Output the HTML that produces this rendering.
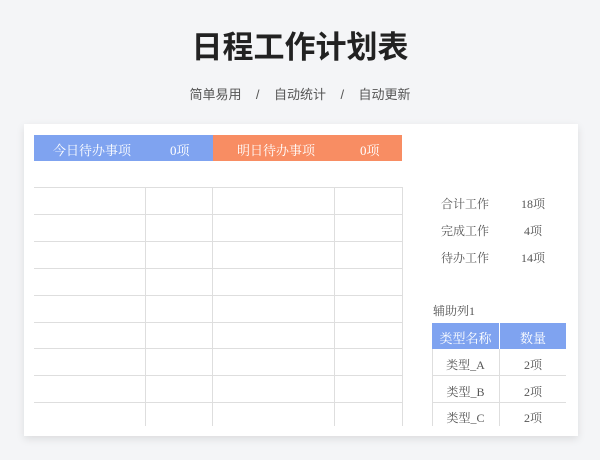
<!DOCTYPE html>
<html><head><meta charset="utf-8"><style>
*{margin:0;padding:0;box-sizing:border-box}
body{width:600px;height:460px;background:#f4f5f7;position:relative;overflow:hidden;font-family:"Liberation Serif","Noto Serif CJK SC",serif}
.t{position:absolute;left:0;width:600px;text-align:center;font-family:"Liberation Sans","Noto Sans CJK SC",sans-serif}
.card{position:absolute;left:24px;top:124px;width:554px;height:312px;background:#fff;box-shadow:0 3px 8px rgba(0,0,0,.1)}
.a{position:absolute}
.h{position:absolute;height:1px;background:#dedede}
.v{position:absolute;width:1px;background:#dedede}
.w{color:#fff;font-size:13px}
.g{color:#555;font-size:12px}
</style></head><body>
<div class="t" style="top:22px;font-size:31px;font-weight:bold;color:#222;letter-spacing:0px">日程工作计划表</div>
<div class="t" style="top:84px;font-size:13px;color:#555;word-spacing:0">简单易用&nbsp;&nbsp;&nbsp;&nbsp;/&nbsp;&nbsp;&nbsp;&nbsp;自动统计&nbsp;&nbsp;&nbsp;&nbsp;/&nbsp;&nbsp;&nbsp;&nbsp;自动更新</div>
<div class="card"></div>
<div class="a" style="left:34px;top:135px;width:179px;height:26px;background:#7fa3f0"></div>
<div class="a" style="left:213px;top:135px;width:189px;height:26px;background:#f88d63"></div>
<div class="a w" style="left:53px;top:140px">今日待办事项</div>
<div class="a w" style="left:170px;top:140px">0项</div>
<div class="a w" style="left:237px;top:140px">明日待办事项</div>
<div class="a w" style="left:360px;top:140px">0项</div>

<div class="h" style="left:34px;top:187px;width:369px"></div>
<div class="h" style="left:34px;top:214px;width:369px"></div>
<div class="h" style="left:34px;top:241px;width:369px"></div>
<div class="h" style="left:34px;top:268px;width:369px"></div>
<div class="h" style="left:34px;top:295px;width:369px"></div>
<div class="h" style="left:34px;top:322px;width:369px"></div>
<div class="h" style="left:34px;top:348px;width:369px"></div>
<div class="h" style="left:34px;top:375px;width:369px"></div>
<div class="h" style="left:34px;top:402px;width:369px"></div>
<div class="v" style="left:145px;top:187px;height:239px"></div>
<div class="v" style="left:212px;top:187px;height:239px"></div>
<div class="v" style="left:334px;top:187px;height:239px"></div>
<div class="v" style="left:402px;top:187px;height:239px"></div>

<div class="a g" style="left:441px;top:195px">合计工作</div>
<div class="a g" style="left:521px;top:195px">18项</div>
<div class="a g" style="left:441px;top:222px">完成工作</div>
<div class="a g" style="left:524px;top:222px">4项</div>
<div class="a g" style="left:441px;top:249px">待办工作</div>
<div class="a g" style="left:521px;top:249px">14项</div>
<div class="a g" style="left:433px;top:302px">辅助列1</div>

<div class="a" style="left:432px;top:323px;width:67px;height:26px;background:#7fa3f0"></div>
<div class="a" style="left:500px;top:323px;width:66px;height:26px;background:#7fa3f0"></div>
<div class="a w" style="left:432px;top:328px;width:67px;text-align:center">类型名称</div>
<div class="a w" style="left:500px;top:328px;width:66px;text-align:center">数量</div>
<div class="h" style="left:432px;top:375px;width:134px"></div>
<div class="h" style="left:432px;top:402px;width:134px"></div>
<div class="v" style="left:432px;top:349px;height:77px"></div>
<div class="v" style="left:499px;top:349px;height:77px"></div>
<div class="a g" style="left:432px;top:356px;width:67px;text-align:center">类型_A</div>
<div class="a g" style="left:500px;top:356px;width:66px;text-align:center">2项</div>
<div class="a g" style="left:432px;top:383px;width:67px;text-align:center">类型_B</div>
<div class="a g" style="left:500px;top:383px;width:66px;text-align:center">2项</div>
<div class="a g" style="left:432px;top:409px;width:67px;text-align:center">类型_C</div>
<div class="a g" style="left:500px;top:409px;width:66px;text-align:center">2项</div>
</body></html>
